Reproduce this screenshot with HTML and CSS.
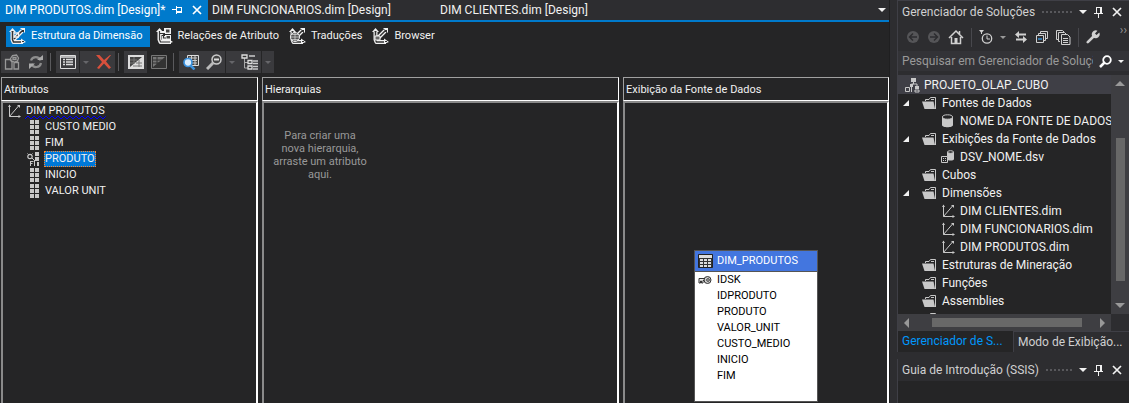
FILE: index.html
```html
<!DOCTYPE html>
<html lang="pt-BR">
<head>
<meta charset="utf-8">
<title>DIM PRODUTOS.dim [Design]</title>
<link rel="stylesheet" href="styles.css">
</head>
<body>
<svg class="defs" aria-hidden="true">
  <defs><pattern id="zigzag" width="6" height="3" patternUnits="userSpaceOnUse"><path d="M0 2h1v1H0zM1 1h1v1H1zM2 0h2v1H2zM4 1h1v1H4zM5 2h1v1H5z" fill="#00f"/></pattern></defs>
  <symbol id="pin" viewBox="0 0 12 12"><path d="M3 1.500h5M3.500 1v6M7.500 1v6M8.500 1v6M1 7.500h9M5.500 8v4" fill="none" stroke="currentColor"/></symbol>
  <symbol id="close" viewBox="0 0 12 12"><path d="M2 2l8 8M10 2l-8 8" fill="none" stroke="currentColor" stroke-width="1.700"/></symbol>
  <symbol id="caret" viewBox="0 0 8 4"><path d="M0 0h8l-4 4z" fill="currentColor"/></symbol>
  <symbol id="axes" viewBox="0 0 16 16"><path d="M3.500 2v11.500H14M3.500 13.500L12.500 3" fill="none" stroke="#c8c8c8"/><path d="M2 4l1.500-2.500L5 4zM12.500 12l2.500 1.500-2.500 1.500zM11 2h3v3z" fill="#c8c8c8"/></symbol>
  <symbol id="folder" viewBox="0 0 16 16"><path d="M3.500 6V4.500H7l1.500-2h5v11.500" fill="none" stroke="#c8c8c8"/><path d="M0 6.500h11.500l1.500 7.500H2.500z" fill="#c8c8c8"/><path d="M9 4.500h3" stroke="#c8c8c8"/></symbol>
  <symbol id="grid" viewBox="0 0 10 14"><path d="M0 0h4v4H0zM5 0h4v4H5zM0 5h4v4H0zM5 5h4v4H5zM0 10h4v4H0zM5 10h4v4H5z" fill="#c8c8c8"/></symbol>
  <symbol id="dim-base" viewBox="0 0 17 16"><path d="M3.500 3v8.500l1 2.500H14M5 11l8-8" fill="none" stroke="#f1f1f1" stroke-width="4" stroke-linejoin="round"/><path d="M3.500 3v8.500l1 2.500H14M5 11l8-8" fill="none" stroke="#333" stroke-width="1.500"/><path d="M0 4l3.500-4L7 4zM12 10.500l5 3.500-5 2zM11 0h5v5z" fill="#f1f1f1"/><path d="M2.500 3h2v1h-2zM13 2h2v2h-2zM13 13h2v1h-2z" fill="#333"/></symbol>
</svg>
<div class="app">
  <main class="editor">
    <nav class="doc-tabs">
      <div class="doc-tab doc-tab-active"><a href="#produtos">DIM PRODUTOS.dim [Design]*</a>
        <button class="plain" aria-label="Fixar"><svg width="12" height="12" viewBox="0 0 12 12"><path d="M0 5.500h4M4.500 2v8M5 3.500h5M9.500 3v6M5 7.500h5M5 8.500h5" fill="none" stroke="currentColor"/></svg></button>
        <button class="plain" aria-label="Fechar"><svg width="12" height="12"><use href="#close"/></svg></button>
      </div>
      <a class="doc-tab doc-tab-second" href="#funcionarios">DIM FUNCIONARIOS.dim [Design]</a>
      <a class="doc-tab" href="#clientes">DIM CLIENTES.dim [Design]</a>
      <button class="plain doc-more" aria-label="Documentos abertos"><svg width="8" height="4"><use href="#caret"/></svg></button>
    </nav>
    <nav class="views">
      <button class="view view-active"><svg width="17" height="16"><use href="#dim-base"/><path d="M5 5h5M5 9h5M9.500 5v4" stroke="#f1f1f1" stroke-width="1.500"/></svg>Estrutura da Dimensão</button>
      <button class="view"><svg width="17" height="16" viewBox="0 0 17 16"><path d="M3.500 3v8.500l1 2.500H15M4 5h4M6 10h5" fill="none" stroke="#f1f1f1" stroke-width="4" stroke-linejoin="round"/><path d="M0 4l3.500-4L7 4zM8 0h7v6H8zM9 7h6v5H9zM12 10.500l5 3.500-5 2z" fill="#f1f1f1"/><path d="M3.500 3v8.500l1 2.500H14M4 5.500h5M7.500 5.500v4.500H10" fill="none" stroke="#333" stroke-width="1.200"/><path d="M10 1.500h3.500v3H10zM10.500 8h3.500v2.500h-3.500z" fill="#444"/></svg>Relações de Atributo</button>
      <button class="view"><svg width="17" height="16"><use href="#dim-base"/><circle cx="6" cy="9" r="4.500" fill="#555" stroke="#f1f1f1"/><path d="M2 9h8M6 5v8M3 6.500h6M3 11.500h6" stroke="#ddd" stroke-width=".7"/></svg>Traduções</button>
      <button class="view"><svg width="17" height="16"><use href="#dim-base"/><path d="M3 8h5v4H3z" fill="#666" stroke="#f1f1f1"/></svg>Browser</button>
    </nav>
    <div class="toolbar" role="toolbar">
      <div class="group">
        <button class="tool" aria-label="Processar"><svg width="17" height="16" viewBox="0 0 17 16"><g fill="none" stroke="#989898" stroke-width="1.300"><path d="M1.500 5.500H6L8 8v7H1.500zM10 8.500h4.500v6.500H10zM6.500 4.500l2-3 4-.5 2 3-1 3-3 1-3-1zM9 3.500h3v2H9z"/></g></svg></button>
        <button class="tool" aria-label="Atualizar"><svg width="16" height="16" viewBox="0 0 16 16"><path d="M3 6.500a5 5 0 0 1 9.500 0M13 9a5 5 0 0 1-9.500 1" fill="none" stroke="#8d8d8d" stroke-width="2.200"/><path d="M9 6h6V1zM7 9.500H1V15z" fill="#aaa"/></svg></button>
      </div>
      <div class="group sep">
        <button class="tool" aria-label="Exibir como lista"><svg width="16" height="16" viewBox="0 0 16 16"><path d="M.5 1.500h15v13H.5z" fill="none" stroke="#ddd"/><path d="M1 3h14M3 5.500h2M6 5.500h7M3 8h2M6 8h7M3 10.500h2M6 10.500h7" stroke="#ddd" stroke-width="1.300"/></svg></button>
        <button class="tool-drop" aria-label="Opções de exibição"><svg width="6" height="3"><use href="#caret"/></svg></button>
        <button class="tool" aria-label="Excluir"><svg width="16" height="16" viewBox="0 0 16 16"><path d="M0 1h3.500l4.500 5 6-5h1L10 7.500l5 6-2 1.500-5-5.500L3 15l-2-1 5-6z" fill="#d9503c"/></svg></button>
      </div>
      <div class="group sep">
        <button class="tool" aria-label="Mostrar tabelas"><svg width="16" height="16" viewBox="0 0 16 16"><path d="M0 1h16v14H0z" fill="#ddd"/><path d="M2 3h12L2 13z" fill="#444"/><path d="M2 6h7M2 9h5M6 3v6" stroke="#777"/><path d="M11 6v7M8 9h6M5 12h9" stroke="#777"/></svg></button>
        <button class="tool tool-bare" aria-label="Ocultar tabelas"><svg width="16" height="16" viewBox="0 0 16 16"><path d="M.5 1.500h15v13H.5z" fill="#333" stroke="#777"/><path d="M2 3h12L2 13z" fill="#777"/><path d="M2 6h9M2 9h6M6 3v7" stroke="#333"/></svg></button>
      </div>
      <div class="group sep">
        <button class="tool" aria-label="Localizar tabela"><svg width="17" height="16" viewBox="0 0 17 16"><path d="M5.500 1.500h11v10h-11z" fill="#444" stroke="#ddd"/><path d="M7 4h8M7 6.500h8M7 9h8M9.500 2v9M13 2v9" stroke="#ccc"/><circle cx="6" cy="8.500" r="4" fill="#d9edff" stroke="#3b91dd" stroke-width="1.700"/><path d="M8.500 11.500l4 4" stroke="#3b91dd" stroke-width="2.500"/></svg></button>
        <button class="tool" aria-label="Zoom"><svg width="16" height="16" viewBox="0 0 16 16"><path d="M7 9l-6 6" stroke="#bbb" stroke-width="3"/><circle cx="10.500" cy="5.500" r="4.500" fill="#444" stroke="#ccc" stroke-width="1.500"/><path d="M8 5.500h5" stroke="#ddd" stroke-width="2"/></svg></button>
        <button class="tool-drop" aria-label="Opções de zoom"><svg width="6" height="3"><use href="#caret"/></svg></button>
        <button class="tool" aria-label="Hierarquia"><svg width="17" height="16" viewBox="0 0 17 16"><path d="M3.500 4v10H7M4 8.500h4" fill="none" stroke="#aaa"/><path d="M1 1h5v3H1zM7 6.500h4v3H7zM7 12h4v3H7z" fill="#333" stroke="#ddd" stroke-width="1.300"/><path d="M8 2h6M12 7h5M12 9.500h5M12 12.500h5M12 15h5" stroke="#ccc" stroke-width="1.300"/></svg></button>
        <button class="tool-drop" aria-label="Opções de hierarquia"><svg width="6" height="3"><use href="#caret"/></svg></button>
      </div>
    </div>
    <div class="panes">
      <section class="pane pane-attributes">
        <h2>Atributos</h2>
        <div class="pane-body">
          <ul class="attrs">
            <li class="attr-root"><svg width="16" height="16"><use href="#axes"/></svg><span class="squiggle">DIM PRODUTOS<svg class="squiggle-line" aria-hidden="true"><rect width="100%" height="3" fill="url(#zigzag)"/></svg></span></li>
            <li><svg width="10" height="14"><use href="#grid"/></svg><span>CUSTO MEDIO</span></li>
            <li><svg width="10" height="14"><use href="#grid"/></svg><span>FIM</span></li>
            <li class="attr-key"><svg width="13" height="14" viewBox="0 0 13 14"><path d="M8 0h4v4H8zM8 5h4v4H8zM10 10h2v4h-2z" fill="#c8c8c8"/><circle cx="3" cy="4.500" r="2.200" fill="#252526" stroke="#c8c8c8" stroke-width="1.200"/><path d="M5 6l3 3M.5 1.500l1 1M5.500 1.500l-1 1M3.500 9v5M3.500 9.500h3M3.500 11.500h2M7.500 9v5" fill="none" stroke="#c8c8c8"/></svg><span class="selected">PRODUTO</span></li>
            <li><svg width="10" height="14"><use href="#grid"/></svg><span>INICIO</span></li>
            <li><svg width="10" height="14"><use href="#grid"/></svg><span>VALOR UNIT</span></li>
          </ul>
        </div>
      </section>
      <section class="pane pane-hierarchies">
        <h2>Hierarquias</h2>
        <div class="pane-body"><p class="hint">Para criar uma<br>nova hierarquia,<br>arraste um atributo<br>aqui.</p></div>
      </section>
      <section class="pane pane-source">
        <h2>Exibição da Fonte de Dados</h2>
        <div class="pane-body">
          <div class="entity">
            <h3><svg width="15" height="14" viewBox="0 0 15 14"><path d="M.5.5h14v13H.5z" fill="#333" stroke="#222"/><path d="M1 1h13v3H1zM2 5h3v2H2zM6 5h3v2H6zM10 5h3v2h-3zM2 8h3v2H2zM6 8h3v2H6zM10 8h3v2h-3zM2 11h3v2H2zM6 11h3v2H6zM10 11h3v2h-3z" fill="#ddd"/></svg>DIM_PRODUTOS</h3>
            <ul>
              <li class="entity-key"><svg width="14" height="8" viewBox="0 0 14 8"><path d="M1 2.500h6v2H5V7H3.500V5H2.500v2H1z" fill="#eee" stroke="#333"/><circle cx="9.500" cy="4" r="3.500" fill="#ccc" stroke="#333"/><circle cx="10" cy="4" r="1.300" fill="#eee" stroke="#333"/></svg>IDSK</li>
              <li>IDPRODUTO</li><li>PRODUTO</li><li>VALOR_UNIT</li><li>CUSTO_MEDIO</li><li>INICIO</li><li>FIM</li>
            </ul>
          </div>
        </div>
      </section>
    </div>
  </main>
  <aside class="side">
    <section class="explorer">
      <header class="tool-title"><h2>Gerenciador de Soluções</h2><span class="grip"></span>
        <button class="plain" aria-label="Menu"><svg width="8" height="4"><use href="#caret"/></svg></button>
        <button class="plain" aria-label="Fixar painel"><svg width="12" height="12"><use href="#pin"/></svg></button>
        <button class="plain" aria-label="Fechar painel"><svg width="12" height="12"><use href="#close"/></svg></button>
      </header>
      <div class="explorer-tools" role="toolbar">
        <button class="plain" aria-label="Voltar"><svg width="14" height="14" viewBox="0 0 14 14"><circle cx="7" cy="7" r="6" fill="#555558"/><path d="M11 7H4M7 3.500L3.500 7 7 10.500" fill="none" stroke="#2d2d30" stroke-width="1.500"/></svg></button>
        <button class="plain" aria-label="Avançar"><svg width="14" height="14" viewBox="0 0 14 14"><circle cx="7" cy="7" r="6" fill="#555558"/><path d="M3 7h7M7 3.500L10.500 7 7 10.500" fill="none" stroke="#2d2d30" stroke-width="1.500"/></svg></button>
        <button class="plain" aria-label="Início"><svg width="16" height="16" viewBox="0 0 16 16"><path d="M1 9l7-7 7 7M11.500 5V2M3.500 8v6.500h9V8" fill="none" stroke="#d0d0d0" stroke-width="1.500"/><path d="M6.500 9h3v5h-3z" fill="#d0d0d0"/></svg></button>
        <span class="divider"></span>
        <button class="plain" aria-label="Filtro"><svg width="14" height="16" viewBox="0 0 14 16"><path d="M0 1h5L3 3.500V5H2V3.500z" fill="#d0d0d0"/><circle cx="8" cy="9.500" r="4.700" fill="none" stroke="#d0d0d0" stroke-width="1.300"/><path d="M8 6.500v3.500h3" fill="none" stroke="#d0d0d0"/></svg></button>
        <button class="plain" aria-label="Opções do filtro"><svg width="6" height="3"><use href="#caret"/></svg></button>
        <button class="plain push" aria-label="Sincronizar"><svg width="14" height="14" viewBox="0 0 14 14"><path d="M3 4.500h9M2 9.500h9" stroke="#d0d0d0" stroke-width="2"/><path d="M5 1v7L1 4.500zM9 6v7l4-3.500z" fill="#d0d0d0"/></svg></button>
        <button class="plain push" aria-label="Recolher tudo"><svg width="12" height="12" viewBox="0 0 12 12"><path d="M.5 4.500h7v7h-7zM2.500 4V2.500h7v7H8M4.500 2V.5h7v7H10" fill="none" stroke="#d0d0d0"/><path d="M2 8h4" stroke="#3ba3ee" stroke-width="1.300"/></svg></button>
        <button class="plain push" aria-label="Mostrar todos os arquivos"><svg width="15" height="15" viewBox="0 0 15 15"><path d="M2 9.500H.5V.500h6L8 2M4 11.500H2.500v-9h6L10 4M5.500 4.500h6l2.500 2.500v7.500H5.500zM7 8.500h5M7 10.500h5M7 12.500h5" fill="none" stroke="#d0d0d0"/></svg></button>
        <span class="divider"></span>
        <button class="plain" aria-label="Propriedades"><svg width="14" height="14" viewBox="0 0 14 14"><path d="M1.800 12.200L8 6" stroke="#d0d0d0" stroke-width="2.600" stroke-linecap="round"/><path d="M11.500.7L9 3.500l1.500 1.500 2.800-2.500A4 4 0 1 1 11.500.7z" fill="#d0d0d0"/></svg></button>
        <span class="overflow">››</span>
      </div>
      <div class="search">
        <input type="text" aria-label="Pesquisar" placeholder="Pesquisar em Gerenciador de Soluções">
        <button class="plain" aria-label="Buscar"><svg width="13" height="13" viewBox="0 0 13 13"><path d="M6 7l-5 5" stroke="#fff" stroke-width="2.500"/><circle cx="8" cy="5" r="3.800" fill="none" stroke="#fff" stroke-width="1.800"/></svg></button>
        <button class="plain search-drop" aria-label="Opções de pesquisa"><svg width="6" height="3"><use href="#caret"/></svg></button>
      </div>
      <div class="tree-area">
        <ul class="tree">
          <li class="project"><svg width="16" height="16" viewBox="0 0 16 16"><path d="M7 1h5v4H7zM11 9h4v3h-4zM6 7h3v3H6z" fill="#c8c8c8"/><path d="M9.500 4v3H13v3M7.500 9V7H10M11 13h4v2h-4z" fill="none" stroke="#c8c8c8"/><path d="M1.500 10.500h4v4h-4zM7.500 8v7" fill="none" stroke="#c8c8c8"/></svg>PROJETO_OLAP_CUBO</li>
          <li class="open"><svg width="16" height="16"><use href="#folder"/></svg>Fontes de Dados</li>
          <li class="leaf"><svg width="16" height="16" viewBox="0 0 16 16"><path d="M2 4v8c0 3 11 3 11 0V4z" fill="#c8c8c8"/><ellipse cx="7.500" cy="4" rx="5" ry="2.200" fill="#252526" stroke="#c8c8c8"/></svg>NOME DA FONTE DE DADOS</li>
          <li class="open"><svg width="16" height="16"><use href="#folder"/></svg>Exibições da Fonte de Dados</li>
          <li class="leaf"><svg width="16" height="16" viewBox="0 0 16 16"><path d="M7 3v7c0 2 7 2 7 0V3z" fill="#c8c8c8"/><ellipse cx="10.500" cy="3" rx="3" ry="1.300" fill="#252526" stroke="#c8c8c8"/><path d="M1.500 7.500h6v6h-6z" fill="#252526" stroke="#c8c8c8"/><path d="M3 9h1v1H3zM5 9h1v1H5zM3 11h1v1H3zM5 11h1v1H5z" fill="#c8c8c8"/></svg>DSV_NOME.dsv</li>
          <li><svg width="16" height="16"><use href="#folder"/></svg>Cubos</li>
          <li class="open"><svg width="16" height="16"><use href="#folder"/></svg>Dimensões</li>
          <li class="leaf"><svg width="16" height="16"><use href="#axes"/></svg>DIM CLIENTES.dim</li>
          <li class="leaf"><svg width="16" height="16"><use href="#axes"/></svg>DIM FUNCIONARIOS.dim</li>
          <li class="leaf"><svg width="16" height="16"><use href="#axes"/></svg>DIM PRODUTOS.dim</li>
          <li><svg width="16" height="16"><use href="#folder"/></svg>Estruturas de Mineração</li>
          <li><svg width="16" height="16"><use href="#folder"/></svg>Funções</li>
          <li><svg width="16" height="16"><use href="#folder"/></svg>Assemblies</li>
          <li><svg width="16" height="16"><use href="#folder"/></svg></li>
        </ul>
        <div class="vscroll"><svg width="10" height="5" viewBox="0 0 10 5"><path d="M5 0l5 5H0z" fill="#999"/></svg><div class="vtrack"><span class="vthumb"></span></div><svg width="10" height="5" viewBox="0 0 10 5"><path d="M0 0h10L5 5z" fill="#999"/></svg></div>
      </div>
      <div class="hscroll"><svg width="5" height="10" viewBox="0 0 5 10"><path d="M5 0v10L0 5z" fill="#999"/></svg><div class="htrack"><span class="hthumb"></span></div><svg width="5" height="10" viewBox="0 0 5 10"><path d="M0 0v10l5-5z" fill="#999"/></svg></div>
      <nav class="side-tabs"><a class="side-tab side-tab-active" href="#solucoes">Gerenciador de S...</a><a class="side-tab" href="#modo">Modo de Exibição...</a></nav>
    </section>
    <section class="guide">
      <header class="tool-title"><h2>Guia de Introdução (SSIS)</h2><span class="grip"></span>
        <button class="plain" aria-label="Menu do guia"><svg width="8" height="4"><use href="#caret"/></svg></button>
        <button class="plain" aria-label="Fixar guia"><svg width="12" height="12"><use href="#pin"/></svg></button>
        <button class="plain" aria-label="Fechar guia"><svg width="12" height="12"><use href="#close"/></svg></button>
      </header>
    </section>
  </aside>
</div>
</body>
</html>
```

FILE: styles.css
```css
* { box-sizing: border-box; }
body { margin: 0; background: #2d2d30; color: #f1f1f1; font: 12px/18px Roboto, "Open Sans", sans-serif; }
h2, h3, ul, p { margin: 0; padding: 0; font-size: inherit; font-weight: 400; }
ul { list-style: none; }
a { color: inherit; text-decoration: none; }
button, input { font: inherit; color: inherit; border: 0; padding: 0; margin: 0; background: none; }
svg { display: block; flex: none; }
.defs { position: absolute; width: 0; height: 0; }
.plain { display: flex; align-items: center; justify-content: center; flex: none; }

.app { display: flex; height: 100vh; overflow: hidden; }
.editor { flex: 1; min-width: 0; display: flex; flex-direction: column; background: #252526; }

.doc-tabs { display: flex; height: 22px; background: #2d2d30; border-bottom: 2px solid #007acc; white-space: nowrap; }
.doc-tab { padding: 1px 4px; }
.doc-tab-active { display: flex; align-items: center; gap: 7px; width: 208px; padding: 0 5px; background: #007acc; color: #fff; }
.doc-tab-active a { flex: 1; }
.doc-tab-second { width: 228px; }
.doc-more { margin-left: auto; width: 14px; }

.views { display: flex; padding: 4px 6px; font-size: 11px; white-space: nowrap; }
.view { display: flex; align-items: center; gap: 5px; height: 21px; padding: 0 7px 2px 3px; }
.view-active { margin-right: 3px; background: #007acc; color: #fff; }

.toolbar { display: flex; height: 22px; padding-left: 1px; }
.group { display: flex; background: #3a3a3d; }
.sep { margin-left: 9px; position: relative; }
.sep::before { content: ""; position: absolute; left: -6px; top: 2px; bottom: 2px; width: 1px; background: #5a5a5d; }
.tool { display: flex; align-items: center; justify-content: center; width: 23px; }
.tool-bare { background: #252526; }
.tool-drop { display: flex; align-items: center; justify-content: center; width: 13px; color: #66666a; border-left: 1px solid #252526; }

.panes { flex: 1; display: flex; gap: 4px; padding: 4px 0 0 1px; min-height: 0; font-size: 11px; }
.pane { display: flex; flex-direction: column; min-width: 0; }
.pane-attributes { flex: 257; }
.pane-hierarchies { flex: 357; }
.pane-source { flex: 266; }
.pane h2 { height: 24px; padding: 3px 2px; border: 1px solid #a0a0a0; border-right-color: #fff; border-bottom-color: #fff; }
.pane-body { flex: 1; position: relative; border: 2px solid #8a8a8a; border-right-color: #fff; border-bottom: 0; }

.attrs { padding-left: 3px; line-height: 16px; }
.attrs li { display: flex; align-items: center; gap: 4px; height: 16px; padding-left: 24px; }
.attrs li span { padding: 0 1px; }
.attrs .attr-root { padding-left: 0; gap: 3px; }
.attrs .attr-key { padding-left: 21px; }
.attrs .selected { height: 16px; line-height: 14px; padding: 0; background: #0078d7; border: 1px dotted #ff872a; }
.squiggle { position: relative; }
.squiggle-line { position: absolute; left: 0; bottom: 0; width: 100%; height: 3px; }
.hint { width: 112px; padding-top: 26px; color: #999; text-align: center; line-height: 13px; }

.entity { position: absolute; left: 69px; top: 147px; width: 124px; height: 152px; background: #fff; border: 1px solid #555; color: #000; }
.entity h3 { display: flex; align-items: center; gap: 4px; height: 21px; padding-left: 3px; background: #4376df; color: #fff; border-bottom: 1px solid #555; }
.entity ul { line-height: 16px; }
.entity li { padding-left: 22px; }
.entity .entity-key { display: flex; align-items: center; gap: 5px; padding-left: 3px; }

.side { flex: 0 0 240px; display: flex; flex-direction: column; gap: 7px; padding-left: 7px; min-width: 0; background: #2d2d30; border-left: 1px solid #1f1f20; }
.explorer { flex: 1; min-height: 0; display: flex; flex-direction: column; border-left: 1px solid #3f3f46; border-top: 1px solid #3f3f46; }
.tool-title { display: flex; align-items: center; height: 22px; padding: 0 6px 0 4px; gap: 6px; color: #d0d0d0; white-space: nowrap; }
.tool-title .plain { color: #f1f1f1; }
.grip { flex: 1; height: 5px; background: radial-gradient(circle, #58585c 0.8px, transparent 1px) 0 0 / 4px 4px; }
.explorer-tools { display: flex; align-items: center; height: 28px; padding: 0 2px 0 8px; gap: 7px; color: #999; }
.divider { width: 1px; height: 19px; background: #48484d; }
.push { margin-left: 1px; }
.overflow { margin: 0 0 14px auto; line-height: 10px; }
.search { display: flex; align-items: center; gap: 6px; height: 20px; padding: 0 5px 0 4px; background: #333337; }
.search-drop { color: #f1f1f1; }
.search input { flex: 1; min-width: 0; }
.search input::placeholder { color: #999; opacity: 1; }
.tree-area { flex: 1; min-height: 0; display: flex; margin-top: 4px; background: #252526; overflow: hidden; }
.tree { flex: 1; min-width: 0; overflow: hidden; white-space: nowrap; }
.tree li { display: flex; align-items: center; gap: 4px; height: 18px; padding-left: 24px; }
.tree .project { height: 19px; padding-left: 6px; background: #3f3f46; }
.tree .leaf { padding-left: 42px; }
.tree .open { padding-left: 5px; gap: 4px; }
.tree .open::before { content: ""; margin-right: 9px; border-left: 6px solid transparent; border-bottom: 6px solid #f1f1f1; }
.vscroll { flex: 0 0 18px; display: flex; flex-direction: column; align-items: center; padding: 6px 0; gap: 4px; background: #3e3e42; }
.vtrack { flex: 1; display: flex; flex-direction: column; padding: 48px 0 18px; }
.vthumb { flex: 1; width: 9px; background: #686868; }
.hscroll { flex: none; display: flex; align-items: center; height: 17px; margin-right: 18px; padding: 0 6px; gap: 6px; background: #3e3e42; }
.htrack { flex: 1; padding: 0 12px 0 17px; }
.hthumb { display: block; height: 9px; background: #686868; }
.side-tabs { display: flex; flex: none; height: 21px; white-space: nowrap; background: #3f3f46; }
.side-tab { flex: 1; min-width: 0; overflow: hidden; padding: 1px 4px; color: #d0d0d0; background: #2d2d30; border-left: 1px solid #3f3f46; border-top: 1px solid #3f3f46; }
.side-tab-active { background: #252526; color: #0097fb; border: 0; }
.guide { flex: none; height: 44px; border-left: 1px solid #3f3f46; background: #252526; }
.guide .tool-title { background: #2d2d30; }
```
